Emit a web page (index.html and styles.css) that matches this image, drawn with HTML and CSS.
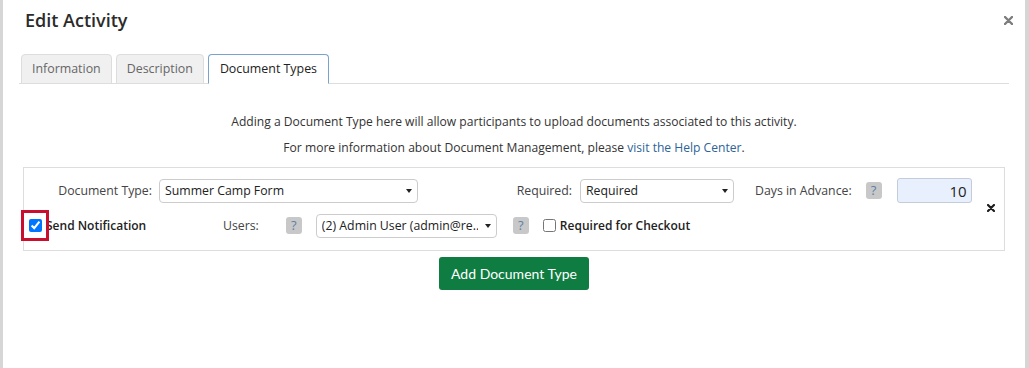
FILE: index.html
```html
<!DOCTYPE html>
<html lang="en">
<head>
  <meta charset="UTF-8" />
  <title>Edit Activity</title>
  <link rel="stylesheet" href="styles.css">
</head>
<body>
  <div class="modal">
    <div class="modal-header">
      <h1>Edit Activity</h1>
      <button class="close" title="Close">
        <svg width="9" height="9" viewBox="0 0 9 9"><path d="M1 1L8 8M8 1L1 8" stroke="#7d7d7d" stroke-width="2.4" stroke-linecap="round"/></svg>
      </button>
    </div>

    <ul class="tabs">
      <li class="tab">Information</li>
      <li class="tab">Description</li>
      <li class="tab active">Document Types</li>
    </ul>

    <div class="intro">
      <p>Adding a Document Type here will allow participants to upload documents associated to this activity.</p>
      <p>For more information about Document Management, please <a href="#">visit the Help Center</a>.</p>
    </div>

    <div class="doc-row">
      <div class="fields">
        <div class="line">
          <label class="lbl lbl-type">Document Type:</label>
          <span class="select-wrap w-type"><select><option>Summer Camp Form</option></select></span>
          <label class="lbl lbl-req">Required:</label>
          <span class="select-wrap w-req"><select><option>Required</option></select></span>
          <label class="lbl lbl-days">Days in Advance:</label>
          <span class="help help-days">?</span>
          <input class="days" type="text" value="10">
        </div>
        <div class="line">
          <span class="check-mark"><input type="checkbox" checked></span>
          <label class="strong lbl-notify">Send Notification</label>
          <label class="lbl">Users:</label>
          <span class="help help-users">?</span>
          <span class="select-wrap w-users"><select><option>(2) Admin User (admin@re...</option></select></span>
          <span class="help help-after">?</span>
          <input class="check-out" type="checkbox">
          <label class="strong lbl-checkout">Required for Checkout</label>
        </div>
      </div>
      <button class="remove" title="Remove">
        <svg width="8" height="8" viewBox="0 0 8 8"><path d="M1 1L7 7M7 1L1 7" stroke="#1e1e1e" stroke-width="2.2" stroke-linecap="round"/></svg>
      </button>
    </div>

    <div class="actions">
      <button class="add-btn">Add Document Type</button>
    </div>
  </div>
</body>
</html>
```

FILE: styles.css
```css
body {
  margin: 0;
  background: #d6d6d6;
  font-family: 'Open Sans', 'Liberation Sans', sans-serif;
  color: #333;
  font-size: 12px;
}
.modal {
  margin-left: 3px;
  width: 1022px;
  height: 368px;
  background: #fff;
  overflow: hidden;
}
.modal-header {
  display: flex;
  justify-content: space-between;
  align-items: center;
  padding: 7px 12px 0 22px;
}
.modal-header h1 {
  margin: 0;
  font-size: 18px;
  line-height: 26px;
  font-weight: 600;
  color: #2b2b2b;
}
.close, .remove {
  border: none;
  background: none;
  padding: 0;
  display: flex;
  cursor: pointer;
}
.tabs {
  list-style: none;
  display: flex;
  gap: 4px;
  margin: 21px 16px 0;
  padding: 0 0 0 2px;
  border-bottom: 1px solid #ddd;
}
.tab {
  padding: 6px 10px;
  line-height: 16px;
  font-size: 12.4px;
  border: 1px solid #ddd;
  border-radius: 4px 4px 0 0;
  background: #f0f0f0;
  color: #666;
  margin-bottom: -1px;
}
.tab.active {
  background: #fff;
  color: #222;
  padding: 6px 11px;
  border-color: #7aa3c9;
  border-bottom-color: #fff;
}
.intro {
  text-align: center;
  margin-top: 25px;
}
.intro p {
  margin: 0;
  line-height: 26px;
  font-size: 12.1px;
  color: #333;
}
.intro a {
  color: #2d6399;
  text-decoration: none;
}
.doc-row {
  display: flex;
  align-items: center;
  margin: 6px 20px 0;
  border: 1px solid #ddd;
  padding: 10px 9px 12px 0;
}
.fields {
  flex: 1;
  display: flex;
  flex-direction: column;
  gap: 10px;
}
.line {
  display: flex;
  align-items: center;
  height: 25px;
}
.lbl {
  color: #444;
  font-size: 12.3px;
}
.lbl-type {
  width: 128px;
  text-align: right;
  margin-right: 7px;
}
.lbl-req {
  width: 154px;
  text-align: right;
  margin-right: 8px;
}
.lbl-days {
  margin-left: 21px;
}
.select-wrap {
  position: relative;
  display: block;
}
.select-wrap select {
  appearance: none;
  width: 100%;
  height: 24px;
  border: 1px solid #ccc;
  border-radius: 4px;
  background: #fff;
  font: 12.3px 'Open Sans', 'Liberation Sans', sans-serif;
  color: #222;
  padding: 0 18px 0 5px;
}
.select-wrap::after {
  content: '';
  position: absolute;
  right: 6px;
  top: 10px;
  border-left: 3.5px solid transparent;
  border-right: 3.5px solid transparent;
  border-top: 4px solid #222;
}
.w-type { width: 259px; }
.w-req { width: 154px; }
.w-users { width: 181px; margin-left: 14px; }
.help {
  display: inline-block;
  width: 16px;
  height: 17px;
  line-height: 17px;
  text-align: center;
  border-radius: 3px;
  background: #c8c8c8;
  color: #5b80a8;
  font-size: 13px;
}
.help-days { margin-left: 14px; }
.help-users { margin-left: 27px; }
.help-after { margin-left: 16px; }
.days {
  margin-left: 15px;
  width: 75px;
  height: 25px;
  box-sizing: border-box;
  border: 1px solid #c3ccd8;
  border-radius: 3px;
  background: #e8f0fe;
  text-align: right;
  padding: 0 4px;
  font: 15px 'Open Sans', 'Liberation Sans', sans-serif;
  color: #222;
}
.check-mark {
  position: relative;
  display: flex;
  margin-left: 5px;
}
.check-mark input, .check-out {
  margin: 0;
  width: 13px;
  height: 13px;
}
.check-mark::after {
  content: '';
  position: absolute;
  left: -8px;
  top: -9px;
  width: 22px;
  height: 25px;
  border: 3px solid #c8102e;
}
.strong {
  font-weight: 600;
  color: #222;
}
.lbl-notify {
  margin-left: 4px;
  width: 177px;
}
.check-out {
  margin-left: 14px;
}
.lbl-checkout {
  margin-left: 4px;
}
.actions {
  display: flex;
  justify-content: center;
  margin-top: 6px;
}
.add-btn {
  width: 150px;
  height: 33px;
  border: none;
  border-radius: 3px;
  background: #0f7c41;
  color: #fff;
  font: 14px 'Lato', 'Liberation Sans', sans-serif;
  cursor: pointer;
}
```
